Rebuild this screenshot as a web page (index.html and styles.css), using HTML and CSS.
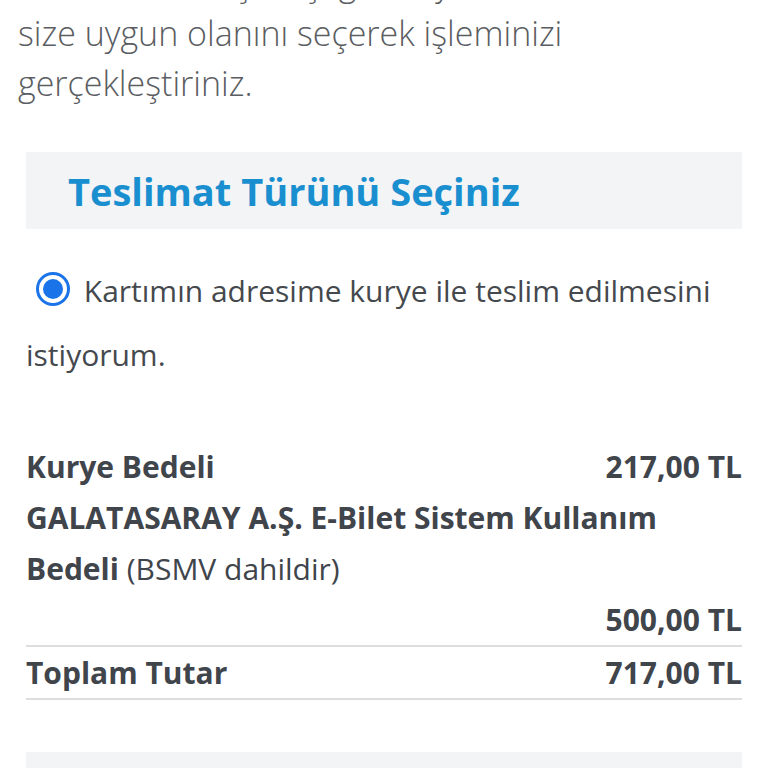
FILE: index.html
```html
<!DOCTYPE html>
<html lang="tr">
<head>
    <meta charset="UTF-8">
    <meta name="viewport" content="width=device-width, initial-scale=1.0">
    <title>Teslimat</title>
    <link rel="stylesheet" href="styles.css">
</head>
<body>
    <div class="container">
        <!-- Açıklama -->
        <p class="intro">
            Kart teslimatı için aşağıdaki yöntemlerden<br>
            size uygun olanını seçerek işleminizi<br>
            gerçekleştiriniz.
        </p>

        <div class="section-title">
            <h2>Teslimat Türünü Seçiniz</h2>
        </div>

        <label class="option">
            <span class="radio"></span>
            Kartımın adresime kurye ile teslim edilmesini istiyorum.
        </label>

        <table class="fees">
            <tr>
                <td>Kurye Bedeli</td>
                <td class="price">217,00 TL</td>
            </tr>
            <tr>
                <td colspan="2">GALATASARAY A.Ş. E-Bilet Sistem Kullanım Bedeli <span class="note">(BSMV dahildir)</span></td>
            </tr>
            <tr>
                <td></td>
                <td class="price">500,00 TL</td>
            </tr>
            <tr class="total">
                <td>Toplam Tutar</td>
                <td class="price">717,00 TL</td>
            </tr>
        </table>

        <div class="section-title next"></div>
    </div>
</body>
</html>
```

FILE: styles.css
```css
body {
    margin: 0;
    font-family: 'Open Sans', sans-serif;
    background-color: #fff;
    color: #444950;
    height: 768px;
    overflow: hidden;
}
.container {
    padding: 0 26px;
}
.intro {
    margin: -42px 0 0 -8px;
    font-size: 34px;
    font-weight: 300;
    line-height: 50px;
    color: #5a5d61;
    white-space: nowrap;
}
.section-title {
    background-color: #f3f4f6;
    height: 77px;
    margin-top: 44px;
    display: flex;
    align-items: center;
    padding-left: 42px;
}
.section-title h2 {
    margin: 0;
    font-size: 38px;
    font-weight: 700;
    color: #1a8fd0;
}
.option {
    display: block;
    margin-top: 30px;
    font-size: 30px;
    line-height: 64px;
    color: #45494e;
}
.radio {
    display: inline-block;
    width: 28px;
    height: 28px;
    border: 3px solid #1a73e8;
    border-radius: 50%;
    margin: 0 6px 0 10px;
    vertical-align: -4px;
    position: relative;
}
.radio::after {
    content: '';
    position: absolute;
    top: 4px;
    left: 4px;
    width: 20px;
    height: 20px;
    border-radius: 50%;
    background-color: #1a73e8;
}
.fees {
    width: 100%;
    border-collapse: collapse;
    margin-top: 54px;
    font-size: 30px;
    font-weight: 700;
    color: #40444b;
}
.fees td {
    padding: 0;
    line-height: 51px;
    vertical-align: top;
}
.fees .price {
    text-align: right;
    white-space: nowrap;
}
.fees .note {
    font-weight: 400;
}
.fees .total td {
    border-top: 2px solid #ddd;
    border-bottom: 2px solid #ddd;
}
.section-title.next {
    margin-top: 52px;
}
```
